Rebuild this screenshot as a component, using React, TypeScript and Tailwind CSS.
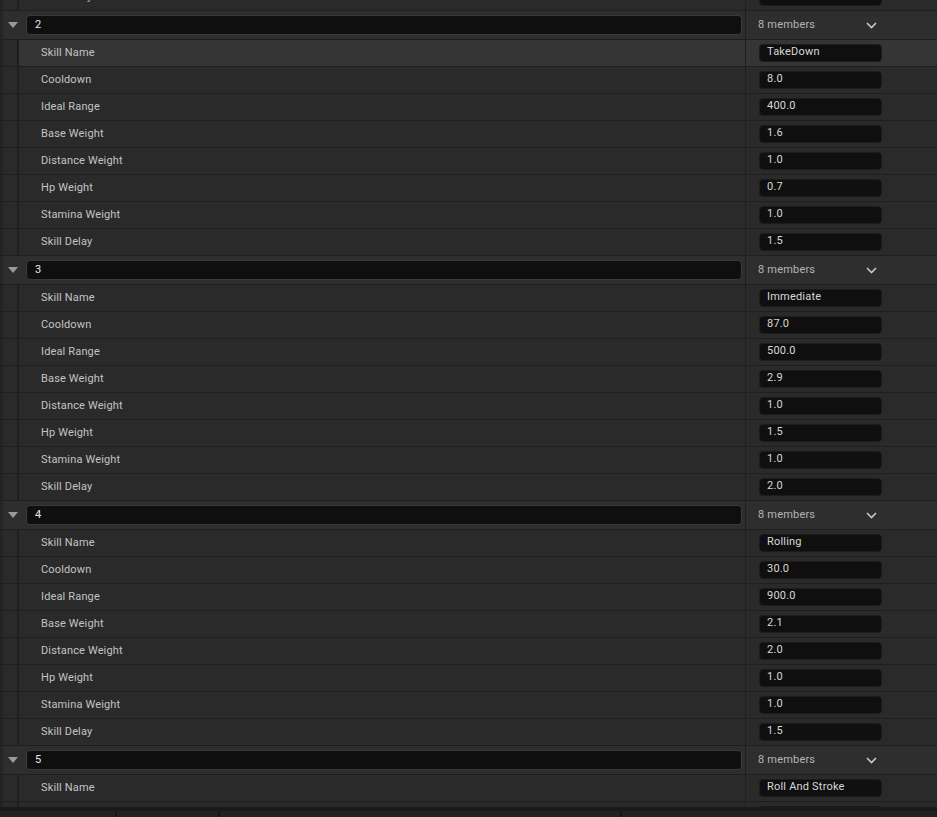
import React from "react";

type Group = { id: string; values: string[] };

const LABELS = [
  "Skill Name",
  "Cooldown",
  "Ideal Range",
  "Base Weight",
  "Distance Weight",
  "Hp Weight",
  "Stamina Weight",
  "Skill Delay",
];

const GROUPS: Group[] = [
  { id: "2", values: ["TakeDown", "8.0", "400.0", "1.6", "1.0", "0.7", "1.0", "1.5"] },
  { id: "3", values: ["Immediate", "87.0", "500.0", "2.9", "1.0", "1.5", "1.0", "2.0"] },
  { id: "4", values: ["Rolling", "30.0", "900.0", "2.1", "2.0", "1.0", "1.0", "1.5"] },
  { id: "5", values: ["Roll And Stroke", "1.0", "", "", "", "", "", ""] },
];

function Row({ label, value, highlight }: { label: string; value: string; highlight?: boolean }) {
  const bg = highlight ? "bg-[#353535]" : "bg-[#2a2a2a]";
  return (
    <div className="flex h-[27px] border-b border-[#1f1f1f] shrink-0">
      <div className="w-[3px] bg-[#232323]" />
      <div className="w-[14px] bg-[#2a2a2a]" />
      <div className="w-[2px] bg-[#1f1f1f]" />
      <div className={`w-[726px] flex items-center pl-[22px] text-[11px] tracking-[0.15px] text-[#c4c4c4] ${bg}`}>
        {label}
      </div>
      <div className="w-px bg-[#1f1f1f]" />
      <div className={`flex-1 flex items-center pl-[13px] ${bg}`}>
        <div className="w-[123px] h-[18px] rounded-[4px] bg-[#0f0f0f] border border-[#1c1c1c] flex items-center pl-[7px] pb-[1px] text-[11px] tracking-[0.2px] text-[#d8d8d8]">
          {value}
        </div>
      </div>
    </div>
  );
}

function Header({ id }: { id: string }) {
  return (
    <div className="flex h-[29px] border-b border-[#1f1f1f] shrink-0 bg-[#2e2e2e]">
      <div className="w-[3px] bg-[#252525]" />
      <div className="w-[742px] flex items-center">
        <div className="w-[23px] flex items-center pl-[5px]">
          <svg width="10" height="6" viewBox="0 0 10 6">
            <polygon points="0,0 10,0 5,6" fill="#9a9a9a" />
          </svg>
        </div>
        <div className="w-[716px] h-[20px] rounded-[4px] bg-[#0f0f0f] border border-[#3a3a3a] flex items-center pl-[8px] text-[11px] text-[#eaeaea]">
          {id}
        </div>
      </div>
      <div className="w-px bg-[#1f1f1f]" />
      <div className="flex-1 flex items-center pl-[12px] text-[11px] tracking-[0.2px] text-[#b4b4b4]">
        <span className="w-[108px]">8 members</span>
        <svg width="11" height="7" viewBox="0 0 11 7">
          <polyline points="1,1 5.5,5.5 10,1" fill="none" stroke="#c8c8c8" strokeWidth="1.6" />
        </svg>
      </div>
    </div>
  );
}

export default function App() {
  return (
    <div
      className="w-[937px] h-[817px] overflow-hidden flex flex-col bg-[#2a2a2a]"
      style={{ fontFamily: "Roboto, 'Noto Sans', sans-serif" }}
    >
      <div className="h-[807px] overflow-hidden shrink-0">
        <div className="mt-[-16px] flex flex-col">
          <Row label="Skill Delay" value="1.0" />
          {GROUPS.map((g) => (
            <React.Fragment key={g.id}>
              <Header id={g.id} />
              {LABELS.map((l, i) => (
                <Row
                  key={l}
                  label={l}
                  value={g.values[i]}
                  highlight={g.id === "2" && i === 0}
                />
              ))}
            </React.Fragment>
          ))}
        </div>
      </div>
      <div className="h-[10px] flex flex-col shrink-0 bg-[#1a1a1a]">
        <div className="h-[4px]" />
        <div className="flex-1 flex">
          <div className="w-[115px] bg-[#222222]" />
          <div className="w-[2px] bg-[#161616]" />
          <div className="w-[101px] bg-[#222222]" />
          <div className="w-[2px] bg-[#161616]" />
          <div className="w-[400px] bg-[#222222]" />
          <div className="w-[2px] bg-[#161616]" />
          <div className="flex-1 bg-[#222222]" />
        </div>
      </div>
    </div>
  );
}
